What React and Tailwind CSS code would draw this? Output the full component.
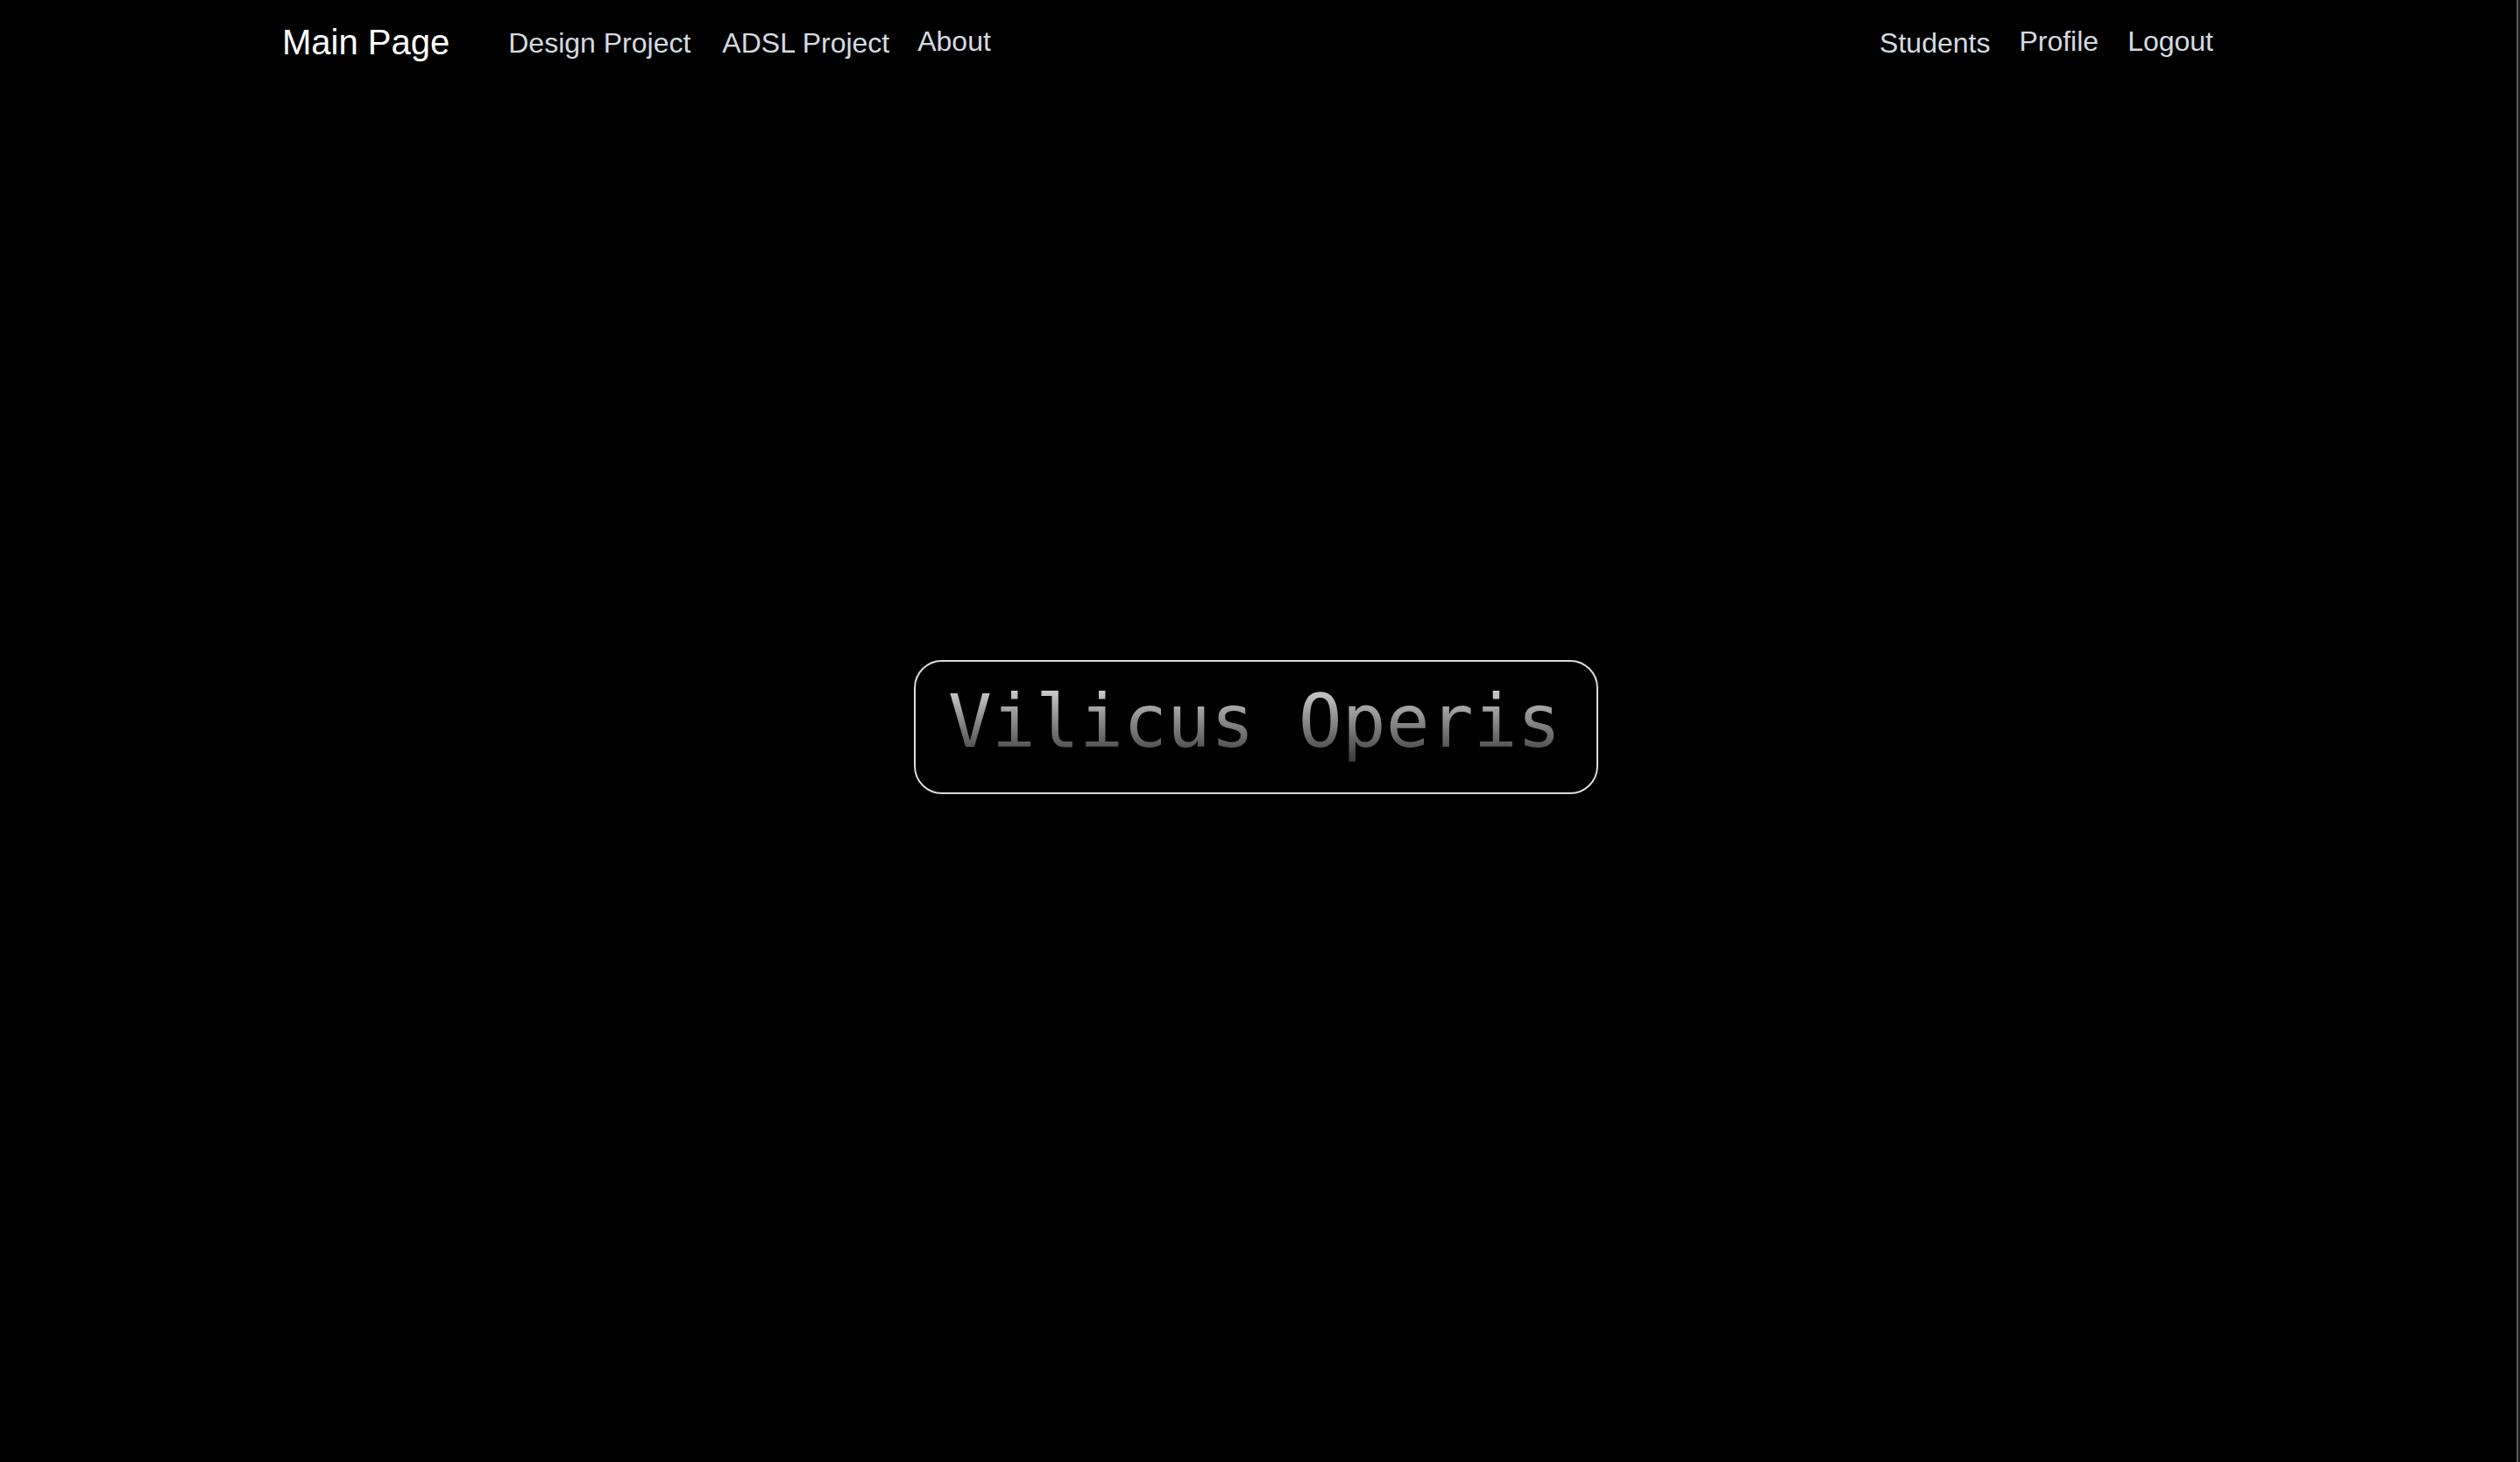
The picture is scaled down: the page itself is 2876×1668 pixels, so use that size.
export default function App() {
  const sans = { fontFamily: '"Liberation Sans", Arial, sans-serif' };
  return (
    <div className="flex h-[1668px] w-full bg-black overflow-hidden">
      <div className="flex-1 flex flex-col border-r-2 border-[#5a5a5a]">
        <nav
          className="flex items-start h-[100px] pl-[322px] pr-[346px] text-[32px] leading-none text-[#d4dae0]"
          style={sans}
        >
          <a className="mt-[28px] text-[40px] text-white">Main Page</a>
          <a className="mt-[33px] ml-[67px]">Design Project</a>
          <a className="mt-[33px] ml-[36px]">ADSL Project</a>
          <a className="mt-[31px] ml-[32px]">About</a>
          <div className="flex-1" />
          <a className="mt-[33px]">Students</a>
          <a className="mt-[31px] ml-[33px]">Profile</a>
          <a className="mt-[31px] ml-[33px]">Logout</a>
        </nav>
        <div className="flex justify-center pt-[653px] pr-[5px]">
          <div className="w-[781px] border-2 border-[#dcdcdc] rounded-[32px] pl-[37px] pr-[40px] pt-[20px] pb-[32px]">
            <h1
              className="m-0 text-[83px] leading-[97px] font-normal whitespace-nowrap bg-gradient-to-b from-[#e4e4e4] to-[#363636] bg-clip-text text-transparent"
              style={{ fontFamily: '"DejaVu Sans Mono", monospace' }}
            >
              Vilicus Operis
            </h1>
          </div>
        </div>
      </div>
      <div className="w-[2px] bg-[#1c1c1c]" />
    </div>
  );
}
